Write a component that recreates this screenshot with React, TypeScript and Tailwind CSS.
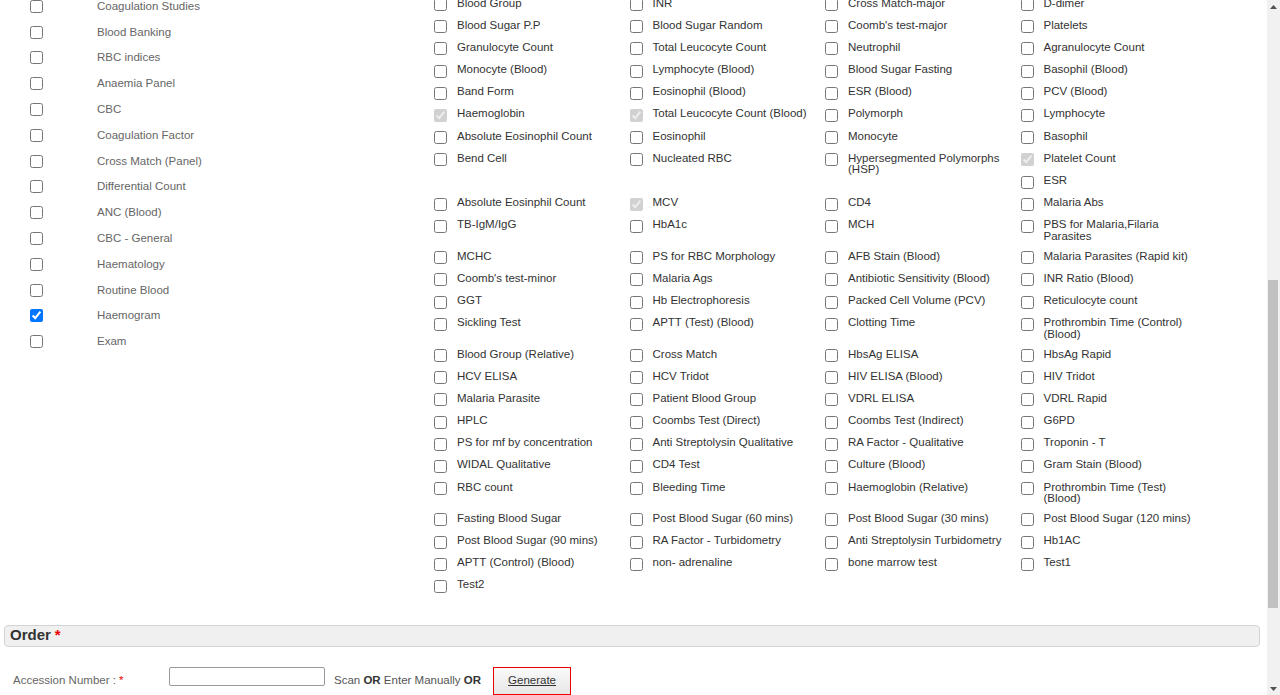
import React from "react";

const panels = [
  "Coagulation Studies",
  "Blood Banking",
  "RBC indices",
  "Anaemia Panel",
  "CBC",
  "Coagulation Factor",
  "Cross Match (Panel)",
  "Differential Count",
  "ANC (Blood)",
  "CBC - General",
  "Haematology",
  "Routine Blood",
  "Haemogram",
  "Exam",
];

// tests that come pre-selected with the Haemogram panel
const locked = ["Haemoglobin", "Total Leucocyte Count (Blood)", "Platelet Count", "MCV"];

const tests = [
  "Blood Group", "INR", "Cross Match-major", "D-dimer",
  "Blood Sugar P.P", "Blood Sugar Random", "Coomb's test-major", "Platelets",
  "Granulocyte Count", "Total Leucocyte Count", "Neutrophil", "Agranulocyte Count",
  "Monocyte (Blood)", "Lymphocyte (Blood)", "Blood Sugar Fasting", "Basophil (Blood)",
  "Band Form", "Eosinophil (Blood)", "ESR (Blood)", "PCV (Blood)",
  "Haemoglobin", "Total Leucocyte Count (Blood)", "Polymorph", "Lymphocyte",
  "Absolute Eosinophil Count", "Eosinophil", "Monocyte", "Basophil",
  "Bend Cell", "Nucleated RBC", "Hypersegmented Polymorphs (HSP)", "Platelet Count",
  "ESR",
  "Absolute Eosinphil Count", "MCV", "CD4", "Malaria Abs",
  "TB-IgM/IgG", "HbA1c", "MCH", "PBS for Malaria,Filaria Parasites",
  "MCHC", "PS for RBC Morphology", "AFB Stain (Blood)", "Malaria Parasites (Rapid kit)",
  "Coomb's test-minor", "Malaria Ags", "Antibiotic Sensitivity (Blood)", "INR Ratio (Blood)",
  "GGT", "Hb Electrophoresis", "Packed Cell Volume (PCV)", "Reticulocyte count",
  "Sickling Test", "APTT (Test) (Blood)", "Clotting Time", "Prothrombin Time (Control) (Blood)",
  "Blood Group (Relative)", "Cross Match", "HbsAg ELISA", "HbsAg Rapid",
  "HCV ELISA", "HCV Tridot", "HIV ELISA (Blood)", "HIV Tridot",
  "Malaria Parasite", "Patient Blood Group", "VDRL ELISA", "VDRL Rapid",
  "HPLC", "Coombs Test (Direct)", "Coombs Test (Indirect)", "G6PD",
  "PS for mf by concentration", "Anti Streptolysin Qualitative", "RA Factor - Qualitative", "Troponin - T",
  "WIDAL Qualitative", "CD4 Test", "Culture (Blood)", "Gram Stain (Blood)",
  "RBC count", "Bleeding Time", "Haemoglobin (Relative)", "Prothrombin Time (Test) (Blood)",
  "Fasting Blood Sugar", "Post Blood Sugar (60 mins)", "Post Blood Sugar (30 mins)", "Post Blood Sugar (120 mins)",
  "Post Blood Sugar (90 mins)", "RA Factor - Turbidometry", "Anti Streptolysin Turbidometry", "Hb1AC",
  "APTT (Control) (Blood)", "non- adrenaline", "bone marrow test", "Test1",
  "Test2",
];

function PanelList() {
  return (
    <div className="w-[434px] shrink-0 pl-[30px]">
      {panels.map((p) => (
        <div key={p} className="flex h-[25.8px] items-center">
          <input
            type="checkbox"
            defaultChecked={p === "Haemogram"}
            className="m-0 h-[13px] w-[13px] shrink-0"
          />
          <span className="ml-[54px] text-[11.5px] text-[#666]">{p}</span>
        </div>
      ))}
    </div>
  );
}

function TestGrid() {
  return (
    <div className="flow-root w-[786px]">
      {tests.map((t, i) => {
        const isLocked = locked.includes(t);
        return (
          <div
            key={t + i}
            className="float-left flex w-[195.5px] items-start gap-[10px] pt-[4px] pb-[4.7px]"
          >
            <input
              type="checkbox"
              defaultChecked={isLocked}
              disabled={isLocked}
              className="m-0 mt-[0.5px] h-[13px] w-[13px] shrink-0"
            />
            <span className="w-[160px] text-[11.5px] leading-[11.3px] text-[#333]">{t}</span>
          </div>
        );
      })}
    </div>
  );
}

function Scrollbar() {
  return (
    <div className="flex h-full w-[13px] shrink-0 flex-col bg-[#f1f1f1]">
      <div className="flex h-[13px] items-center justify-center">
        <svg width="7" height="4" viewBox="0 0 7 4">
          <polygon points="3.5,0 7,4 0,4" fill="#505050" />
        </svg>
      </div>
      <div className="ml-[1px] mt-[267px] h-[328px] w-[10px] bg-[#c1c1c1]" />
      <div className="flex-1" />
      <div className="flex h-[13px] items-center justify-center">
        <svg width="7" height="4" viewBox="0 0 7 4">
          <polygon points="0,0 7,0 3.5,4" fill="#505050" />
        </svg>
      </div>
    </div>
  );
}

export default function App() {
  return (
    <div
      className="flex h-[695px] w-[1280px] overflow-hidden bg-white"
      style={{ fontFamily: '"Liberation Sans", Arial, sans-serif' }}
    >
      <div className="w-[1267px] shrink-0">
        <div className="-mt-[6.5px] flex">
          <PanelList />
          <TestGrid />
        </div>

        <div className="mt-[27px] ml-[4px] mr-[7px] flex h-[22px] items-center rounded-[4px] border border-[#d3d3d3] bg-[#f0f0f0] pl-[5px]">
          <span className="text-[15px] font-bold text-[#333]">Order</span>
          <span className="ml-[4px] text-[15px] font-bold text-[#e00]">*</span>
        </div>

        <div className="mt-[20px] flex h-[28px] items-center pl-[13px]">
          <span className="w-[156px] text-[11.5px] text-[#666]">
            Accession Number : <span className="text-[#e00]">*</span>
          </span>
          <input
            type="text"
            className="h-[19px] w-[156px] self-start rounded-[2px] border border-[#999] bg-white"
          />
          <span className="ml-[9px] text-[11.5px] text-[#555]">
            Scan <b className="text-[#333]">OR</b> Enter Manually <b className="text-[#333]">OR</b>
          </span>
          <button className="ml-[12px] h-[28px] w-[78px] border border-[#e00] bg-gradient-to-b from-[#fafafa] to-[#e6e6e6] text-[11.5px] text-[#333] underline">
            Generate
          </button>
        </div>
      </div>
      <Scrollbar />
    </div>
  );
}
